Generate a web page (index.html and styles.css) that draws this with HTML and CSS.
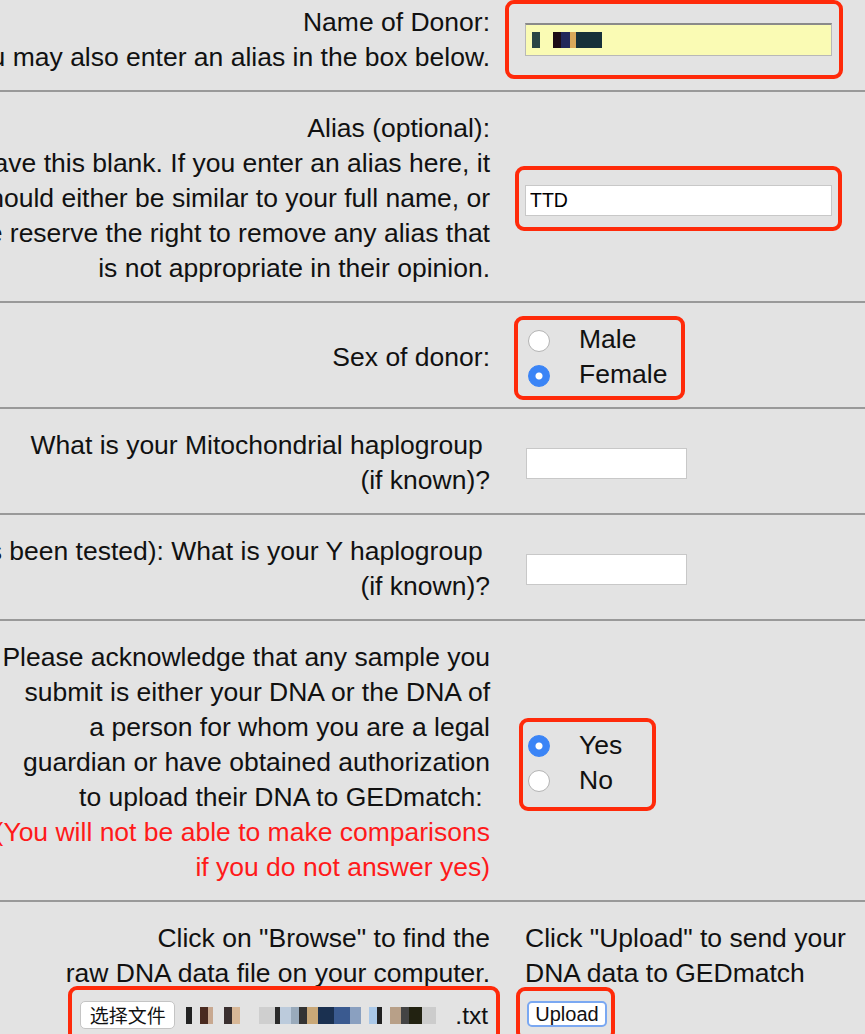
FILE: index.html
```html
<!DOCTYPE html>
<html lang="en">
<head>
  <title>Upload Raw DNA File</title>
  <meta charset="UTF-8">
  <meta name="viewport" content="width=device-width, initial-scale=1">
  <link rel="stylesheet" href="styles.css">
</head>
<body>
  <form class="upload-form" method="post" action="#">
    <div class="row">
      <div class="label">Name of Donor:<br>Enter your full name. You may also enter an alias in the box below.</div>
      <div class="field">
        <span class="mark mark-name">
          <span class="input input-long input-filled"><span class="blur blur-name"></span></span>
        </span>
      </div>
    </div>

    <div class="row">
      <div class="label">Alias (optional):<br>You may leave this blank. If you enter an alias here, it<br>should either be similar to your full name, or<br>something anonymous. We reserve the right to remove any alias that<br>is not appropriate in their opinion.</div>
      <div class="field">
        <span class="mark mark-alias">
          <input class="input input-long input-alias" type="text" name="alias" value="TTD">
        </span>
      </div>
    </div>

    <div class="row">
      <div class="label">Sex of donor:</div>
      <div class="field">
        <span class="mark mark-sex">
          <span class="choices">
            <label class="choice"><input type="radio" name="sex" value="M">Male</label>
            <label class="choice"><input type="radio" name="sex" value="F" checked>Female</label>
          </span>
        </span>
      </div>
    </div>

    <div class="row">
      <div class="label">What is your Mitochondrial haplogroup&nbsp;<br>(if known)?</div>
      <div class="field">
        <input class="input input-short" type="text" name="mtdna">
      </div>
    </div>

    <div class="row">
      <div class="label">(If male, or a male relative has been tested): What is your Y haplogroup&nbsp;<br>(if known)?</div>
      <div class="field">
        <input class="input input-short" type="text" name="ydna">
      </div>
    </div>

    <div class="row">
      <div class="label">Please acknowledge that any sample you<br>submit is either your DNA or the DNA of<br>a person for whom you are a legal<br>guardian or have obtained authorization<br>to upload their DNA to GEDmatch:&nbsp;<br><span class="warn">(You will not be able to make comparisons<br>if you do not answer yes)</span></div>
      <div class="field">
        <span class="mark mark-agree">
          <span class="choices">
            <label class="choice"><input type="radio" name="agree" value="Y" checked>Yes</label>
            <label class="choice"><input type="radio" name="agree" value="N">No</label>
          </span>
        </span>
      </div>
    </div>

    <div class="row row-top">
      <div class="label">Click on "Browse" to find the<br>raw DNA data file on your computer.
        <div class="file-line">
          <span class="mark mark-file">
            <span class="file-pick">
              <span class="file-btn">选择文件</span>
              <span class="blur blur-file"></span>
              <span class="file-ext">.txt</span>
            </span>
          </span>
        </div>
      </div>
      <div class="field">Click "Upload" to send your<br>DNA data to GEDmatch
        <div class="file-line">
          <span class="mark mark-upload">
            <button class="upload-btn" type="submit">Upload</button>
          </span>
        </div>
      </div>
    </div>
  </form>
</body>
</html>
```

FILE: styles.css
```css
/* page */
body {
  margin: 0;
  height: 1034px;
  overflow: hidden;
  background: #e3e3e3;
  font-family: "Liberation Sans", Arial, Helvetica, sans-serif;
  font-size: 26.5px;
  line-height: 35px;
  color: #111;
}

/* form table, cut on the left like the screenshot */
.upload-form {
  margin: -14px 0 0 -610px;
}

.row {
  display: grid;
  grid-template-columns: 1100px 1fr;
  column-gap: 35px;
  align-items: center;
  padding: 19px 0 15px;
  border-top: 2px solid #999;
}

.row:first-child {
  border-top: none;
}

.row-top {
  align-items: start;
}

.label {
  text-align: right;
  white-space: nowrap;
}

.field {
  white-space: nowrap;
}

.warn {
  color: #ff1a1a;
}

/* text inputs */
.input {
  display: block;
  box-sizing: border-box;
  margin: 0;
  padding: 0 4px;
  background: #fff;
  border: 1px solid #c8c8c8;
  font-family: "Liberation Sans", Arial, sans-serif;
  font-size: 19.5px;
  color: #000;
  outline: none;
}

.input-long {
  width: 307px;
  height: 31px;
}

.input-alias {
  margin-top: 4px;
}

.input-short {
  width: 161px;
  height: 31px;
  margin-left: 1px;
}

.input-filled {
  height: 33px;
  background: #fafbb4;
  border: 1px solid #b8b8b8;
  border-top: 2px solid #8a8a8a;
  display: flex;
  align-items: center;
}

/* pixelated values */
.blur {
  display: inline-block;
}

.blur-name {
  width: 70px;
  height: 16px;
  margin-left: 2px;
  background: linear-gradient(90deg, #2a4444 0 11%, transparent 11% 30%, #1c0c18 30% 42%, #22285a 42% 54%, #d8a85a 54% 63%, #16303a 63% 100%);
}

.blur-file {
  width: 268px;
  height: 17px;
  background: linear-gradient(90deg, transparent 0 2%, #222 2% 4%, transparent 4% 7%, #4a2a20 7% 10%, #c8a890 10% 12%, transparent 12% 16%, #3a3030 16% 19%, #d8b898 19% 22%, transparent 22% 29%, #cfcfcf 29% 35%, #2a2a2a 35% 37%, #bccbdc 37% 41%, #99aabb 41% 44%, #333 44% 47%, #c9a878 47% 51%, #1a3050 51% 57%, #3a5a90 57% 63%, #8aa0c0 63% 67%, transparent 67% 70%, #aac8e8 70% 73%, #222 73% 75%, transparent 75% 78%, #b8a088 78% 82%, #444 82% 85%, #221 85% 90%, #ccc 90% 95%, transparent 95%);
}

/* radio buttons */
.choices {
  display: block;
}

.choice {
  display: flex;
  align-items: center;
  height: 35px;
}

.choice input {
  appearance: none;
  -webkit-appearance: none;
  width: 22px;
  height: 22px;
  margin: 2px 29px 0 3px;
  border: 1px solid #b4b4b4;
  border-radius: 50%;
  background: #fff;
}

.choice input:checked {
  border-color: #3a84f6;
  background: radial-gradient(circle, #fff 0 3px, #3a84f6 4px);
}

/* file picker and upload */
.file-line {
  display: flex;
  justify-content: flex-end;
  align-items: center;
  height: 48px;
}

.field .file-line {
  justify-content: flex-start;
}

.file-pick {
  display: flex;
  align-items: center;
  gap: 6px;
}

.file-btn {
  display: inline-block;
  width: 95px;
  height: 28px;
  box-sizing: border-box;
  background: #fff;
  border: 1px solid #c4c4c4;
  border-radius: 5px;
  font-family: "Noto Sans CJK SC", sans-serif;
  font-size: 19px;
  line-height: 26px;
  text-align: center;
}

.file-ext {
  font-size: 24.5px;
  margin-right: 2px;
}

.upload-btn {
  display: block;
  width: 80px;
  height: 26px;
  margin: -3px 0 0 2px;
  padding: 0;
  background: #fff;
  border: 2px solid #7aa8f2;
  border-radius: 5px;
  font-family: "Liberation Sans", Arial, sans-serif;
  font-size: 20px;
  color: #111;
}

/* red annotation boxes drawn over the controls */
.mark {
  position: relative;
  display: inline-block;
  vertical-align: top;
}

.mark::after {
  content: "";
  position: absolute;
  border: 4px solid #ff2a0a;
  border-radius: 9px;
}

.mark-name::after {
  top: -23px;
  bottom: -23px;
  left: -20px;
  right: -11px;
}

.mark-alias::after {
  top: -15px;
  bottom: -15px;
  left: -10px;
  right: -10px;
}

.mark-sex::after {
  top: -6px;
  bottom: -8px;
  left: -11px;
  right: -18px;
}

.mark-agree::after {
  top: -10px;
  bottom: -13px;
  left: -6px;
  right: -34px;
}

.mark-file::after {
  top: -12px;
  bottom: -14px;
  left: -12px;
  right: -10px;
}

.mark-upload::after {
  top: -17px;
  bottom: -14px;
  left: -9px;
  right: -8px;
}
```
